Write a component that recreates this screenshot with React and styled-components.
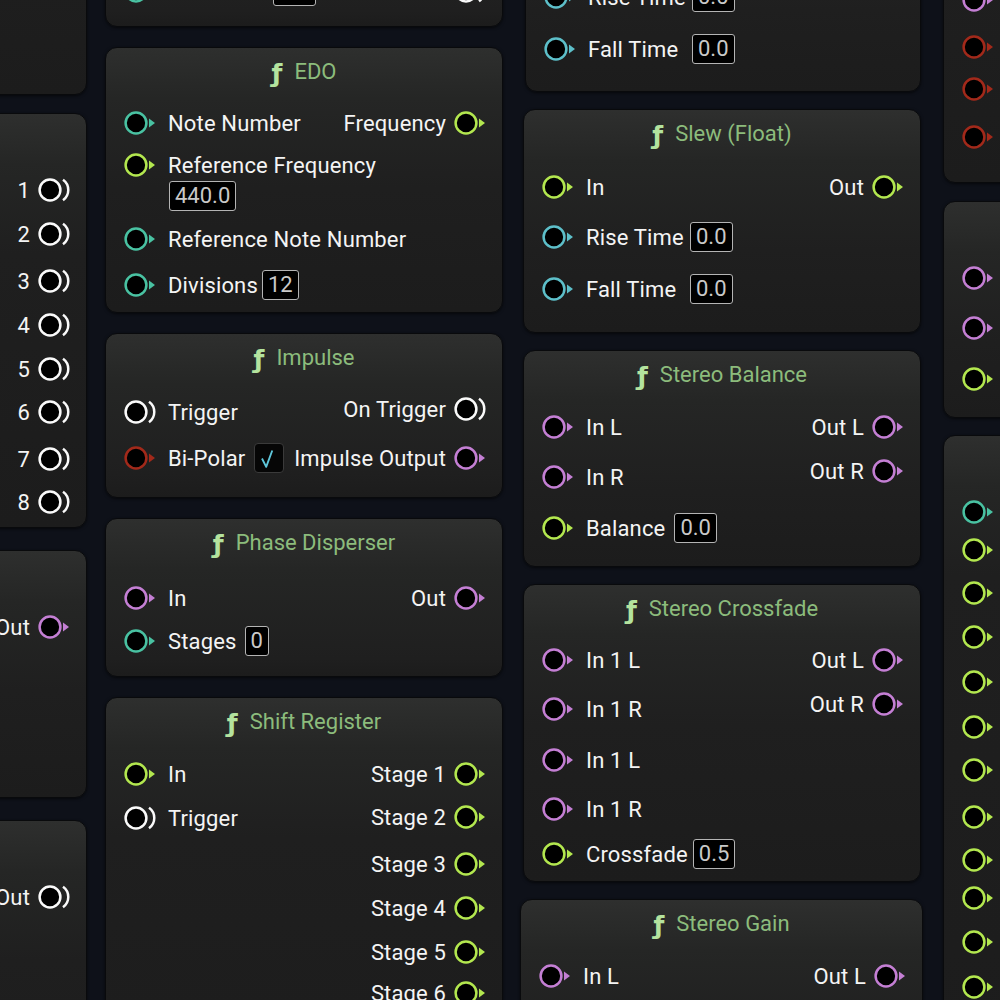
import React from 'react';
import styled, { createGlobalStyle } from 'styled-components';

const GlobalStyle = createGlobalStyle`
body {
  margin: 0;
  background-color: #0e1119;
  font-family: Roboto, "Liberation Sans", sans-serif;
}
`;

const C = {
  teal: '#49c2a2',
  lime: '#b3e74f',
  purple: '#c47fd4',
  red: '#a2291a',
  cyan: '#5dbfc9',
  white: '#fafafa',
};

const nodes = [
  // left column (mostly off-canvas)
  { x: -311, y: -200, w: 398, h: 295, title: 'Clock', inputs: [], outputs: [] },
  {
    x: -311, y: 113, w: 398, h: 415, title: 'Sequencer',
    inputs: [{ label: 'Trigger', color: C.white, trigger: true, mt: 3 }],
    outputs: [3, 0, 3, 0, 0, -1, 3, -1].map((mt, i) => ({ label: String(i + 1), color: C.white, trigger: true, mt })),
  },
  {
    x: -311, y: 550, w: 398, h: 248, title: 'Mixer',
    inputs: [{ label: 'In', color: C.purple, mt: 3 }],
    outputs: [{ label: 'Out', color: C.purple, mt: 3 }],
  },
  {
    x: -311, y: 820, w: 398, h: 300, title: 'Trigger',
    inputs: [],
    outputs: [{ label: 'Out', color: C.white, trigger: true, mt: 3 }],
  },
  // second column
  {
    x: 105, y: -130, w: 398, h: 157, title: 'Comparator',
    inputs: [
      { label: 'In', color: C.teal, mt: 3 },
      { label: 'Threshold', color: C.teal, value: '0.0', mt: 0 },
    ],
    outputs: [
      { label: 'Out', color: C.lime, mt: 3 },
      { label: 'On Cross', color: C.white, trigger: true, mt: 0 },
    ],
  },
  {
    x: 105, y: 47, w: 398, h: 266, title: 'EDO',
    inputs: [
      { label: 'Note Number', color: C.teal, mt: 2 },
      { label: 'Reference Frequency', color: C.lime, mt: -2, sub: '440.0' },
      { label: 'Reference Note Number', color: C.teal, mt: 6 },
      { label: 'Divisions', color: C.teal, value: '12', mt: 2, ml: 4 },
    ],
    outputs: [{ label: 'Frequency', color: C.lime, mt: 2 }],
  },
  {
    x: 105, y: 333, w: 398, h: 165, title: 'Impulse',
    inputs: [
      { label: 'Trigger', color: C.white, trigger: true, mt: 5 },
      { label: 'Bi-Polar', color: C.red, check: true, mt: 2 },
    ],
    outputs: [
      { label: 'On Trigger', color: C.white, trigger: true, mt: 2 },
      { label: 'Impulse Output', color: C.purple, mt: 5 },
    ],
  },
  {
    x: 105, y: 518, w: 398, h: 159, title: 'Phase Disperser',
    inputs: [
      { label: 'In', color: C.purple, mt: 6 },
      { label: 'Stages', color: C.teal, value: '0', mt: -1, ml: 8 },
    ],
    outputs: [{ label: 'Out', color: C.purple, mt: 6 }],
  },
  {
    x: 105, y: 697, w: 398, h: 400, title: 'Shift Register',
    inputs: [
      { label: 'In', color: C.lime, mt: 3 },
      { label: 'Trigger', color: C.white, trigger: true, mt: 0 },
    ],
    outputs: [3, -1, 3, 0, 0, -3].map((mt, i) => ({ label: `Stage ${i + 1}`, color: C.lime, mt })),
  },
  // third column
  {
    x: 525, y: -131, w: 396, h: 223, title: 'Slew (Audio)',
    inputs: [
      { label: 'In', color: C.purple, mt: 4 },
      { label: 'Rise Time', color: C.cyan, value: '0.0', mt: 6, minW: 98 },
      { label: 'Fall Time', color: C.cyan, value: '0.0', mt: 8, minW: 98 },
    ],
    outputs: [{ label: 'Out', color: C.purple, mt: 4 }],
  },
  {
    x: 523, y: 109, w: 398, h: 224, title: 'Slew (Float)',
    inputs: [
      { label: 'In', color: C.lime, mt: 4 },
      { label: 'Rise Time', color: C.cyan, value: '0.0', mt: 6, minW: 98 },
      { label: 'Fall Time', color: C.cyan, value: '0.0', mt: 8, minW: 98 },
    ],
    outputs: [{ label: 'Out', color: C.lime, mt: 4 }],
  },
  {
    x: 523, y: 350, w: 398, h: 217, title: 'Stereo Balance',
    inputs: [
      { label: 'In L', color: C.purple, mt: 3 },
      { label: 'In R', color: C.purple, mt: 6 },
      { label: 'Balance', color: C.lime, value: '0.0', mt: 7, ml: 9 },
    ],
    outputs: [
      { label: 'Out L', color: C.purple, mt: 3 },
      { label: 'Out R', color: C.purple, mt: 0 },
    ],
  },
  {
    x: 523, y: 584, w: 398, h: 298, title: 'Stereo Crossfade',
    inputs: [
      { label: 'In 1 L', color: C.purple, mt: 2 },
      { label: 'In 1 R', color: C.purple, mt: 5 },
      { label: 'In 1 L', color: C.purple, mt: 7 },
      { label: 'In 1 R', color: C.purple, mt: 5 },
      { label: 'Crossfade', color: C.lime, value: '0.5', mt: 1, ml: 5 },
    ],
    outputs: [
      { label: 'Out L', color: C.purple, mt: 2 },
      { label: 'Out R', color: C.purple, mt: 0 },
    ],
  },
  {
    x: 520, y: 899, w: 403, h: 300, title: 'Stereo Gain',
    inputs: [
      { label: 'In L', color: C.purple, mt: 3 },
      { label: 'In R', color: C.purple, mt: 6 },
    ],
    outputs: [
      { label: 'Out L', color: C.purple, mt: 3 },
      { label: 'Out R', color: C.purple, mt: 0 },
    ],
  },
  // right column (mostly off-canvas)
  {
    x: 943, y: -165, w: 400, h: 348, title: 'Stereo Filter',
    inputs: [
      { label: 'In L', color: C.purple, mt: 3 },
      { label: 'In R', color: C.purple, mt: 0 },
      { label: 'Key', color: C.purple, mt: 0 },
      { label: 'Cutoff', color: C.red, mt: 3 },
      { label: 'Resonance', color: C.red, mt: -2 },
      { label: 'Drive', color: C.red, mt: 4 },
    ],
    outputs: [],
  },
  {
    x: 943, y: 201, w: 400, h: 217, title: 'Stereo Pan',
    inputs: [
      { label: 'In L', color: C.purple, mt: 3 },
      { label: 'In R', color: C.purple, mt: 6 },
      { label: 'Pan', color: C.lime, value: '0.0', mt: 7 },
    ],
    outputs: [],
  },
  {
    x: 943, y: 435, w: 400, h: 700, title: 'Mixer',
    inputs: [
      { label: 'Count', color: C.teal, mt: 3 },
      ...[-6, -1, 0, 1, 1, -1, 3, -1, -6, 0, 1].map((mt, i) => ({ label: `Gain ${i + 1}`, color: C.lime, mt })),
    ],
    outputs: [],
  },
];

const Port = ({ color, trigger }) => (
  <PortSvg width="32" height="26" viewBox="0 0 32 26">
    <circle cx="12" cy="13" r="10.4" fill="#000" stroke={color} strokeWidth="2.5" />
    {trigger ? (
      <path d="M25 2.8 A 12.5 12.5 0 0 1 25 23.2" fill="none" stroke={color} strokeWidth="2.5" />
    ) : (
      <polygon points="25,8.5 31,13 25,17.5" fill={color} />
    )}
  </PortSvg>
);

const CheckMark = () => (
  <svg width="30" height="30" viewBox="0 0 30 30">
    <path d="M7.5 15.5 L12 24.5 L18.5 7" fill="none" stroke="#5ec6da" strokeWidth="2" strokeLinejoin="round" />
  </svg>
);

const InputRow = ({ item }) => (
  <>
    <Row $mt={item.mt}>
      <Port color={item.color} trigger={item.trigger} />
      <Label $left $minW={item.minW}>{item.label}</Label>
      {item.value && <ValueBox $ml={item.ml}>{item.value}</ValueBox>}
      {item.check && (
        <CheckBox>
          <CheckMark />
        </CheckBox>
      )}
    </Row>
    {item.sub && (
      <SubRow>
        <ValueBox $ml={0}>{item.sub}</ValueBox>
      </SubRow>
    )}
  </>
);

const OutputRow = ({ item }) => (
  <Row $mt={item.mt}>
    <Label>{item.label}</Label>
    <Port color={item.color} trigger={item.trigger} />
  </Row>
);

const Node = ({ node }) => (
  <NodeBox $x={node.x} $y={node.y} $w={node.w} $h={node.h}>
    <Header>
      <Fn>ƒ</Fn>
      <Title>{node.title}</Title>
    </Header>
    <Body>
      <Column>
        {node.inputs.map((item, i) => (
          <InputRow key={i} item={item} />
        ))}
      </Column>
      <Column $out>
        {node.outputs.map((item, i) => (
          <OutputRow key={i} item={item} />
        ))}
      </Column>
    </Body>
  </NodeBox>
);

const App = () => (
  <>
    <GlobalStyle />
    <Canvas>
      {nodes.map((node, i) => (
        <Node key={i} node={node} />
      ))}
    </Canvas>
  </>
);

export default App;

const Canvas = styled.div`
  position: relative;
  width: 1000px;
  height: 1000px;
  overflow: hidden;
  background-color: #0e1119;
`;

const NodeBox = styled.div`
  position: absolute;
  left: ${(p) => p.$x}px;
  top: ${(p) => p.$y}px;
  width: ${(p) => p.$w}px;
  height: ${(p) => p.$h}px;
  box-sizing: border-box;
  border-radius: 12px;
  border: 1px solid #090a0c;
  background: linear-gradient(180deg, #2e2f2e 0px, #252625 50px, #1f1f1f 140px, #1c1c1c 100%);
  box-shadow: 0 1px 3px rgba(0, 0, 0, 0.6);
`;

const Header = styled.div`
  height: 51px;
  box-sizing: border-box;
  padding-bottom: 4px;
  display: flex;
  align-items: center;
  justify-content: center;
  gap: 12px;
`;

const Fn = styled.span`
  font-family: "DejaVu Sans", Roboto, sans-serif;
  font-size: 25px;
  font-weight: bold;
  color: #b4e39e;
  position: relative;
  top: 2px;
`;

const Title = styled.span`
  font-size: 22px;
  color: #8cbc7c;
  white-space: nowrap;
`;

const Body = styled.div`
  display: grid;
  padding: 0 16px 0 18px;
`;

const Column = styled.div`
  grid-area: 1 / 1;
  display: flex;
  flex-direction: column;
  align-items: ${(p) => (p.$out ? 'flex-end' : 'flex-start')};
`;

const Row = styled.div`
  height: 44px;
  margin-top: ${(p) => p.$mt || 0}px;
  display: flex;
  align-items: center;
`;

const SubRow = styled.div`
  height: 30px;
  margin-top: -6px;
  padding-left: 45px;
  display: flex;
  align-items: center;
`;

const PortSvg = styled.svg`
  flex: none;
  display: block;
`;

const Label = styled.span`
  font-size: 22px;
  letter-spacing: 0.15px;
  color: #f4f4f4;
  white-space: nowrap;
  margin: ${(p) => (p.$left ? '0 0 0 12px' : '0 8px 0 0')};
  min-width: ${(p) => (p.$minW ? `${p.$minW}px` : 'auto')};
`;

const ValueBox = styled.div`
  height: 30px;
  box-sizing: border-box;
  margin-left: ${(p) => (p.$ml ?? 6)}px;
  padding: 0 5px;
  border: 1.5px solid #b4b4b4;
  border-radius: 3px;
  background: #000;
  color: #c9c9c9;
  font-size: 22px;
  line-height: 27px;
  white-space: nowrap;
`;

const CheckBox = styled.div`
  width: 30px;
  height: 30px;
  box-sizing: border-box;
  margin-left: 9px;
  background: #060606;
  border: 1px solid #3a3a3a;
  border-radius: 4px;
  display: flex;
  align-items: center;
  justify-content: center;
`;
